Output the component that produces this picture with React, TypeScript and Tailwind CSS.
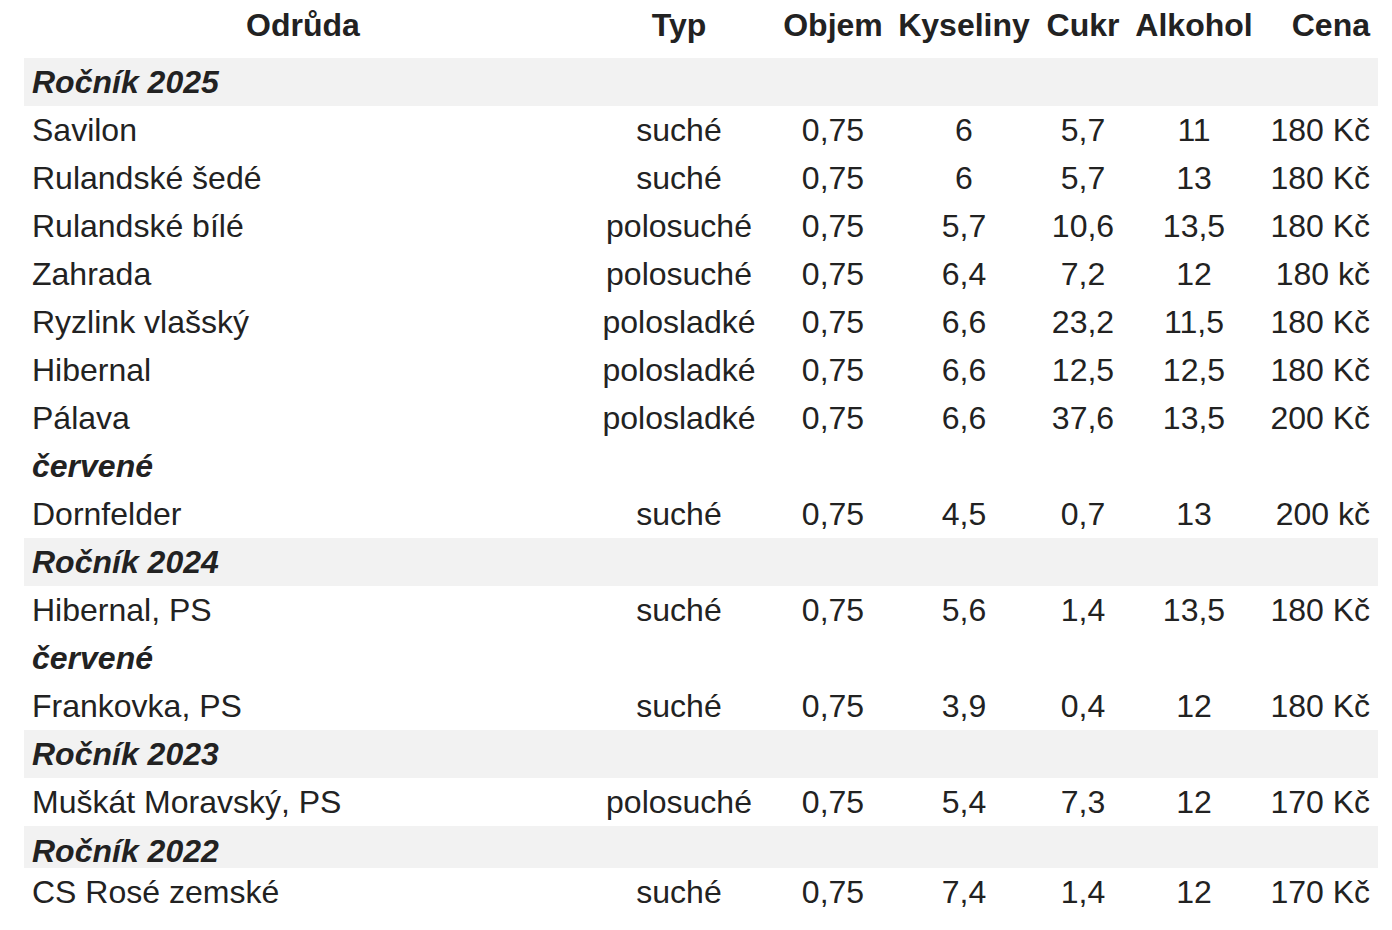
import React from "react";

type Wine = [string, string, string, string, string, string, string];
type Row = { kind: "year"; label: string; short?: boolean } | { kind: "sub"; label: string } | { kind: "wine"; data: Wine };

const rows: Row[] = [
  { kind: "year", label: "Ročník 2025" },
  { kind: "wine", data: ["Savilon", "suché", "0,75", "6", "5,7", "11", "180 Kč"] },
  { kind: "wine", data: ["Rulandské šedé", "suché", "0,75", "6", "5,7", "13", "180 Kč"] },
  { kind: "wine", data: ["Rulandské bílé", "polosuché", "0,75", "5,7", "10,6", "13,5", "180 Kč"] },
  { kind: "wine", data: ["Zahrada", "polosuché", "0,75", "6,4", "7,2", "12", "180 kč"] },
  { kind: "wine", data: ["Ryzlink vlašský", "polosladké", "0,75", "6,6", "23,2", "11,5", "180 Kč"] },
  { kind: "wine", data: ["Hibernal", "polosladké", "0,75", "6,6", "12,5", "12,5", "180 Kč"] },
  { kind: "wine", data: ["Pálava", "polosladké", "0,75", "6,6", "37,6", "13,5", "200 Kč"] },
  { kind: "sub", label: "červené" },
  { kind: "wine", data: ["Dornfelder", "suché", "0,75", "4,5", "0,7", "13", "200 kč"] },
  { kind: "year", label: "Ročník 2024" },
  { kind: "wine", data: ["Hibernal, PS", "suché", "0,75", "5,6", "1,4", "13,5", "180 Kč"] },
  { kind: "sub", label: "červené" },
  { kind: "wine", data: ["Frankovka, PS", "suché", "0,75", "3,9", "0,4", "12", "180 Kč"] },
  { kind: "year", label: "Ročník 2023" },
  { kind: "wine", data: ["Muškát Moravský, PS", "polosuché", "0,75", "5,4", "7,3", "12", "170 Kč"] },
  { kind: "year", label: "Ročník 2022", short: true },
  { kind: "wine", data: ["CS Rosé zemské", "suché", "0,75", "7,4", "1,4", "12", "170 Kč"] },
];

const grid = "grid grid-cols-[558px_194px_114px_148px_90px_132px_118px]";
const align = ["text-left pl-[8px]", "text-center", "text-center", "text-center", "text-center", "text-center", "text-right pr-[8px]"];

export default function App() {
  const headers = ["Odrůda", "Typ", "Objem", "Kyseliny", "Cukr", "Alkohol", "Cena"];
  const headAlign = ["text-center", "text-center", "text-center", "text-center", "text-center", "text-center", "text-right pr-[8px]"];
  return (
    <div
      className="w-[1392px] h-[930px] bg-white text-[#222222] text-[32px] overflow-hidden"
      style={{ fontFamily: '"Liberation Sans", Arial, Helvetica, sans-serif' }}
    >
      <div className="ml-[24px] w-[1354px]">
        <div className={`${grid} h-[58px] pt-[1px] font-bold leading-[48px]`}>
          {headers.map((h, i) => (
            <div key={h} className={`${headAlign[i]} whitespace-nowrap`}>{h}</div>
          ))}
        </div>
        {rows.map((r, idx) => {
          if (r.kind === "year") {
            return r.short ? (
              <div key={idx} className="h-[42px] pt-[4px] leading-[42px] bg-[#f2f2f2] pl-[8px] font-bold italic">
                {r.label}
              </div>
            ) : (
              <div key={idx} className="h-[48px] leading-[48px] bg-[#f2f2f2] pl-[8px] font-bold italic">
                {r.label}
              </div>
            );
          }
          if (r.kind === "sub") {
            return (
              <div key={idx} className="h-[48px] leading-[48px] pl-[8px] font-bold italic">
                {r.label}
              </div>
            );
          }
          return (
            <div key={idx} className={`${grid} h-[48px] leading-[48px]`}>
              {r.data.map((c, i) => (
                <div key={i} className={`${align[i]} whitespace-nowrap`}>{c}</div>
              ))}
            </div>
          );
        })}
      </div>
    </div>
  );
}
